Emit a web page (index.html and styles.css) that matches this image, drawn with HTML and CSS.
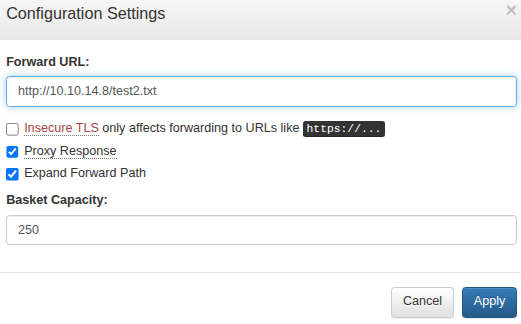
FILE: index.html
```html
<!DOCTYPE html>
<html lang="en">
<head>
<meta charset="utf-8">
<title>Configuration Settings</title>
<link rel="stylesheet" href="styles.css">
</head>
<body>
<div class="modal">
  <div class="modal-header">
    <h4 class="modal-title">Configuration Settings</h4>
    <button type="button" class="close" aria-label="Close">&times;</button>
  </div>
  <div class="modal-body">
    <div class="form-group">
      <label class="control-label" for="forward-url">Forward URL:</label>
      <input id="forward-url" class="form-control is-focused" type="text" value="http://10.10.14.8/test2.txt">
    </div>
    <div class="checkbox">
      <label>
        <input type="checkbox">
        <span><abbr class="text-danger" title="Insecure TLS">Insecure TLS</abbr> only affects forwarding to URLs like <kbd>https://...</kbd></span>
      </label>
    </div>
    <div class="checkbox">
      <label>
        <input type="checkbox" checked>
        <span><abbr title="Proxy Response">Proxy Response</abbr></span>
      </label>
    </div>
    <div class="checkbox">
      <label>
        <input type="checkbox" checked>
        <span>Expand Forward Path</span>
      </label>
    </div>
    <div class="form-group">
      <label class="control-label" for="capacity">Basket Capacity:</label>
      <input id="capacity" class="form-control" type="text" value="250">
    </div>
  </div>
  <div class="modal-footer">
    <button type="button" class="btn btn-default">Cancel</button>
    <button type="button" class="btn btn-primary">Apply</button>
  </div>
</div>
</body>
</html>
```
FILE: styles.css
```css
html, body {
  margin: 0;
  padding: 0;
  overflow: hidden;
  background: #fff;
}
body {
  font-family: "Liberation Sans", Arial, Helvetica, sans-serif;
  font-size: 14px;
  line-height: 1.42857143;
  color: #333;
}
.modal {
  zoom: 0.9;
  width: 600px;
  box-sizing: border-box;
  margin: -13.4px 0 0 -9.3px;
  border: 1px solid rgba(0, 0, 0, .2);
  background: #fff;
}
.modal-header {
  display: flex;
  justify-content: space-between;
  align-items: flex-start;
  padding: 15px;
  border-bottom: 1px solid #e5e5e5;
  background-image: linear-gradient(to bottom, #fbfbfb 0, #e8e8e8 100%);
}
.modal-title {
  margin: 0;
  font-size: 18px;
  font-weight: 500;
  line-height: 1.42857143;
}
.close {
  margin-top: -2px;
  padding: 0;
  border: 0;
  background: none;
  font-family: inherit;
  font-size: 22px;
  font-weight: bold;
  line-height: 1;
  color: #000;
  opacity: .2;
  text-shadow: 0 1px 0 #fff;
  cursor: pointer;
}
.modal-body {
  padding: 15px;
}
.form-group {
  margin-bottom: 15px;
}
.control-label {
  display: inline-block;
  margin-bottom: 5px;
  font-weight: bold;
}
.form-control {
  display: block;
  box-sizing: border-box;
  width: 100%;
  height: 34px;
  margin: 0;
  padding: 6px 12px;
  font-family: inherit;
  font-size: 14px;
  line-height: 1.42857143;
  color: #555;
  background: #fff;
  border: 1px solid #ccc;
  border-radius: 4px;
  box-shadow: inset 0 1px 1px rgba(0, 0, 0, .075);
}
.form-control.is-focused {
  border-color: #66afe9;
  outline: 0;
  box-shadow: inset 0 1px 1px rgba(0, 0, 0, .075), 0 0 8px rgba(102, 175, 233, .6);
}
.checkbox {
  margin: 10px 0;
}
.checkbox + .checkbox {
  margin-top: -5px;
}
.checkbox label {
  display: flex;
  align-items: flex-start;
  min-height: 20px;
  font-weight: normal;
  cursor: pointer;
}
.checkbox input {
  flex: none;
  width: 14px;
  height: 14px;
  margin: 3.5px 6px 0 0;
}
abbr[title] {
  text-decoration: none;
  border-bottom: 1px dotted #777;
  cursor: help;
}
.text-danger {
  color: #a94442;
}
kbd {
  padding: 2px 4px;
  font-family: "Liberation Mono", Menlo, Consolas, "Courier New", monospace;
  font-size: 90%;
  color: #fff;
  background-color: #333;
  border-radius: 3px;
  box-shadow: inset 0 -1px 0 rgba(0, 0, 0, .25);
}
.modal-footer {
  display: flex;
  justify-content: flex-end;
  gap: 9px;
  padding: 15px;
  border-top: 1px solid #e5e5e5;
}
.btn {
  display: inline-block;
  margin: 0;
  padding: 6px 12px;
  font-family: inherit;
  font-size: 14px;
  line-height: 1.42857143;
  border: 1px solid transparent;
  border-radius: 4px;
  cursor: pointer;
  box-shadow: inset 0 1px 0 rgba(255, 255, 255, .15), 0 1px 1px rgba(0, 0, 0, .075);
}
.btn-default {
  color: #333;
  text-shadow: 0 1px 0 #fff;
  background-image: linear-gradient(to bottom, #fff 0, #e0e0e0 100%);
  border-color: #ccc;
}
.btn-primary {
  color: #fff;
  text-shadow: 0 -1px 0 rgba(0, 0, 0, .2);
  background-image: linear-gradient(to bottom, #337ab7 0, #265a88 100%);
  border-color: #245580;
}
```
